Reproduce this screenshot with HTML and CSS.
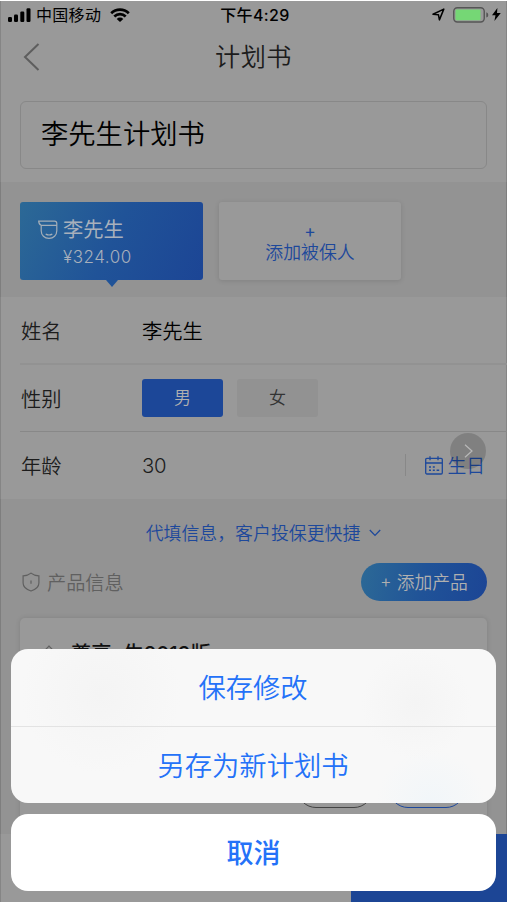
FILE: index.html
```html
<!DOCTYPE html>
<html lang="zh-CN">
<head>
<meta charset="utf-8">
<title>计划书</title>
<link rel="stylesheet" href="styles.css">
</head>
<body>
<div class="screen">
  <header class="status">
    <div class="status-left">
      <svg class="signal" width="24" height="14" viewBox="0 0 24 14"><rect x="0" y="9" width="4" height="5" rx="1.2"/><rect x="6" y="6.5" width="4" height="7.5" rx="1.2"/><rect x="12.3" y="3.5" width="4" height="10.5" rx="1.2"/><rect x="18.5" y="0.3" width="4" height="13.7" rx="1.2"/></svg>
      <span class="carrier">中国移动</span>
      <svg class="wifi" width="20" height="14" viewBox="0 0 20 14"><path d="M1.2 5.2a12.6 12.6 0 0 1 17.6 0M4.3 8.5a8.2 8.2 0 0 1 11.4 0" fill="none" stroke="#000" stroke-width="2.7"/><path d="M6.7 10.9a4.7 4.7 0 0 1 6.6 0L10 14z"/></svg>
    </div>
    <span class="clock">下午4:29</span>
    <div class="status-right">
      <svg width="13" height="13" viewBox="0 0 13 13"><path d="M1 6.2 11.8 1.1 7.4 11.9 6.4 6.7z" fill="none" stroke="#000" stroke-width="1.5" stroke-linejoin="round"/></svg>
      <svg class="battery" width="36" height="16" viewBox="0 0 36 16"><rect x=".75" y=".75" width="30.5" height="14.2" rx="3.6" fill="none" stroke="#555" stroke-width="1.4"/><rect x="2.5" y="2.5" width="25" height="10.8" rx="1" fill="#75d775"/><path d="M33.3 5.3q2 .6 2 2.6t-2 2.6z" fill="#555"/></svg>
      <svg width="9" height="13" viewBox="0 0 9 13"><path d="M5.4 0 0 7.3h3.5L2.4 13 8.8 5.1H5z"/></svg>
    </div>
  </header>
  <nav class="nav">
    <svg class="back" width="17" height="28" viewBox="0 0 17 28"><path d="M15.5 1 2 14l13.5 13" fill="none" stroke="#5e5e5e" stroke-width="2"/></svg>
    <h1>计划书</h1>
  </nav>
  <div class="name-box">李先生计划书</div>

  <section class="people">
    <div class="person">
      <svg class="face" width="20" height="20" viewBox="0 0 20 20" fill="none" stroke="#a3aeb8" stroke-width="1.2"><path d="M3.2 5.3C1.3 4.6.8 3 .7 1.1h15.8q2.3 0 2.3 2.3v1.9zM3.2 5.3v5.4c0 4.6 3.3 7.6 7.8 7.6s7.8-3 7.8-7.6V5.3M7.7 14.1q3.3 1.8 6.6 0"/></svg>
      <div class="person-info"><strong>李先生</strong><span>¥324.00</span></div>
    </div>
    <div class="add-person"><span class="plus">+</span><span>添加被保人</span></div>
  </section>

  <section class="form">
    <div class="row soft"><label>姓名</label><span class="value">李先生</span></div>
    <div class="row"><label>性别</label><span class="choice on">男</span><span class="choice">女</span></div>
    <div class="row"><label>年龄</label><span class="value age">30</span>
      <div class="birthday">
        <svg width="18" height="19" viewBox="0 0 18 19" fill="none" stroke="#1d489b" stroke-width="1.3"><rect x=".7" y="2.4" width="16.6" height="15.6" rx="1.2"/><path d="M.7 7h16.6M5 .2v4M13 .2v4"/><path d="M4 11h2M7.8 11h2M4 14.3h2M7.8 14.3h2M11.6 14.3h2.6" stroke-width="1.5"/></svg>
        <span>生日</span>
        <div class="float"><svg width="10" height="14" viewBox="0 0 10 14"><path d="m1 .8 7 6.2-7 6.2" fill="none" stroke="#b8b8b8" stroke-width="1.2"/></svg></div>
      </div>
    </div>
  </section>

  <section class="products">
    <div class="more"><span>代填信息，客户投保更快捷</span><svg width="12" height="8" viewBox="0 0 12 8"><path d="m.8 1 5.2 5.4L11.2 1" fill="none" stroke="#1d489b" stroke-width="1.3"/></svg></div>
    <div class="heading">
      <svg width="18" height="20" viewBox="0 0 18 20" fill="none" stroke="#606060" stroke-width="1.2"><path d="M9 1.1C6.8 3 4.2 3.7 1.1 3.8v7.1c0 3.9 3.6 6.6 7.9 8.1 4.3-1.5 7.9-4.2 7.9-8.1V3.8C13.8 3.7 11.2 3 9 1.1zM9 8.5v3.2"/></svg>
      <h2>产品信息</h2>
      <div class="add-product"><span>+</span>添加产品</div>
    </div>
    <div class="product">
      <div class="product-title"><svg width="18" height="20" viewBox="0 0 18 20" fill="none" stroke="#606060" stroke-width="1.2"><path d="M9 1.1C6.8 4 4.2 6 1.1 7v5c0 4 4 6 7.9 7 3.9-1 7.9-3 7.9-7V7C13.8 6 11.2 4 9 1.1z"/></svg><strong>尊享e生2019版</strong></div>
      <div class="product-actions"><i></i><i class="primary"></i></div>
    </div>
  </section>
  <footer class="footer"><div class="footer-action"></div></footer>
</div>

<div class="sheet">
  <div class="options"><div class="option">保存修改</div><div class="option">另存为新计划书</div></div>
  <div class="cancel">取消</div>
</div>
</body>
</html>
```
FILE: styles.css
```css
* { box-sizing: border-box; }
body {
  margin: 0;
  background: #fff;
  font-family: Inter, "Noto Sans CJK SC", sans-serif;
  font-weight: 350;
  position: relative;
  width: 507px;
  height: 903px;
  overflow: hidden;
}
svg { display: block; flex: none; }
h1, h2 { margin: 0; font-weight: 350; }
.screen {
  height: 902px;
  border-top: 1px solid #fff;
  background: #999;
  box-shadow: inset 1px 0 #858585, inset -1px 0 #858585;
}
.status {
  height: 27px;
  display: grid;
  grid-template-columns: 1fr auto 1fr;
  align-items: center;
  padding: 0 6px 0 8px;
}
.status-left, .status-right { display: flex; align-items: center; }
.carrier { font-size: 16px; line-height: 20px; font-weight: 400; margin: 0 9px 0 4px; letter-spacing: .3px; }
.clock { font-size: 16px; line-height: 20px; font-weight: 500; letter-spacing: .4px; padding-left: 1px; }
.status-right { justify-content: flex-end; }
.battery { margin: 0 3px 0 8px; }
.nav {
  height: 58px;
  position: relative;
  display: flex;
  justify-content: center;
  align-items: center;
}
.back { position: absolute; left: 23px; top: 15px; }
.nav h1 { color: #1c1c1c; font-size: 25.2px; line-height: 40px; letter-spacing: .4px; }
.name-box {
  margin: 15px 20px 13px;
  height: 68px;
  border: 1px solid #888;
  border-radius: 6px;
  padding: 0 19px 0 20px;
  font-size: 27.3px;
  line-height: 66px;
}
.people {
  height: 115px;
  background: #939393;
  padding: 20px;
  display: flex;
  gap: 16px;
  box-shadow: inset 1px 0 #7e7e7e, inset -1px 0 #7e7e7e;
}
.person, .add-person { height: 78px; border-radius: 3px; }
.person {
  position: relative;
  width: 183px;
  background: linear-gradient(115deg, #2c6996, #205398 50%, #1c4595);
  color: #a8b0bc;
  display: flex;
  padding: 15px 18px;
  gap: 5px;
}
.person::after {
  content: "";
  position: absolute;
  left: 86px;
  top: 78px;
  border: 6px solid transparent;
  border-top: 7px solid #205398;
  border-bottom: 0;
}
.face { margin-top: 3px; }
.person-info { display: flex; flex-direction: column; }
.person-info strong { font-size: 20.3px; line-height: 26px; font-weight: 400; }
.person-info span { font-size: 17px; line-height: 28px; letter-spacing: .5px; }
.add-person {
  width: 182px;
  background: #999;
  box-shadow: 0 1px 5px rgba(0, 0, 0, .12);
  color: #1d489b;
  display: flex;
  flex-direction: column;
  align-items: center;
  padding-top: 18px;
  font-size: 17.9px;
  line-height: 24px;
}
.plus { line-height: 22px; height: 21px; font-size: 17.5px; font-weight: 400; }
.form { height: 202px; padding-left: 20px; }
.row {
  height: 67px;
  display: flex;
  align-items: center;
  border-bottom: 1px solid #888;
  color: #1c1c1c;
  font-size: 20.3px;
}
.row.soft { height: 68px; border-bottom: 2px solid #929292; }
.row:last-child { border: 0; padding-bottom: 1px; }
.row label { width: 122px; padding-left: 1px; }
.row .value { color: #000; }
.row .value.age { color: #1c1c1c; letter-spacing: -.2px; }
.choice {
  width: 81px;
  height: 38px;
  border-radius: 3px;
  margin-right: 14px;
  background: #929292;
  color: #333;
  font-size: 17px;
  line-height: 39px;
  text-align: center;
}
.choice.on { background: #1c4798; color: #b0b0b0; }
.birthday {
  position: relative;
  margin: 0 22px 0 auto;
  border-left: 1px solid #888;
  height: 22px;
  padding-left: 19px;
  display: flex;
  align-items: center;
  gap: 4px;
  color: #1d489b;
  font-size: 18.8px;
}
.birthday span { margin-top: -1px; }
.float {
  position: absolute;
  right: -1px;
  top: -21px;
  width: 36px;
  height: 36px;
  border-radius: 50%;
  background: rgba(0, 0, 0, .16);
  padding: 11px 0 0 14px;
}
.products {
  height: 335px;
  background: #939393;
  padding: 20px 20px 0;
  overflow: hidden;
  box-shadow: inset 1px 0 #7e7e7e, inset -1px 0 #7e7e7e;
}
.more {
  height: 28px;
  display: flex;
  justify-content: center;
  align-items: center;
  gap: 9px;
  padding: 0 0 2px 20px;
  color: #1d489b;
  font-size: 17.9px;
}
.more svg { margin-top: 2px; }
.heading {
  margin-top: 16px;
  height: 38px;
  display: flex;
  align-items: center;
  padding-left: 2px;
  color: #606060;
}
.heading h2 { font-size: 19.2px; margin-left: 7px; }
.add-product {
  margin-left: auto;
  width: 126px;
  height: 38px;
  border-radius: 19px;
  background: linear-gradient(100deg, #2c6996, #205398 50%, #1c4595);
  color: #b0b0b0;
  display: flex;
  justify-content: center;
  align-items: center;
  gap: 5px;
  padding-bottom: 2px;
  font-size: 17.8px;
}
.product {
  margin-top: 17px;
  height: 230px;
  border-radius: 5px;
  background: #999;
  box-shadow: 0 0 5px rgba(0, 0, 0, .12);
  display: flex;
  flex-direction: column;
  justify-content: space-between;
  padding: 21px 22px 40px 20px;
}
.product-title { display: flex; align-items: flex-start; gap: 13px; }
.product-title svg { margin-top: 6px; }
.product-title strong { font-size: 20.3px; line-height: 30px; font-weight: 500; color: #111; }
.product-actions { display: flex; justify-content: flex-end; gap: 16px; }
.product-actions i { width: 76px; height: 38px; border: 1px solid #444; border-radius: 19px; }
.product-actions .primary { border-color: #1d489b; }
.footer { height: 68px; display: flex; justify-content: flex-end; }
.footer-action { width: 156px; background: #1c4595; }
.sheet {
  position: absolute;
  left: 11px;
  right: 11px;
  top: 649px;
  display: flex;
  flex-direction: column;
  gap: 11px;
  color: #2472f8;
  text-align: center;
}
.options {
  border-radius: 17px;
  overflow: hidden;
  height: 154px;
  background: radial-gradient(circle at 405px 55px, #f4f4f4, #f8f8f800 55px), radial-gradient(circle at 90px 45px, #f4f4f4, #f8f8f800 80px), radial-gradient(circle at 420px 155px, #f1f6f9, #f8f8f800 55px), #f8f8f8;
}
.option { height: 77px; font-size: 27.3px; line-height: 80px; padding-right: 1px; }
.option + .option { border-top: 1px solid #e3e3e3; }
.cancel { height: 77px; border-radius: 17px; background: #fff; font-size: 27px; line-height: 80px; font-weight: 500; }
```
